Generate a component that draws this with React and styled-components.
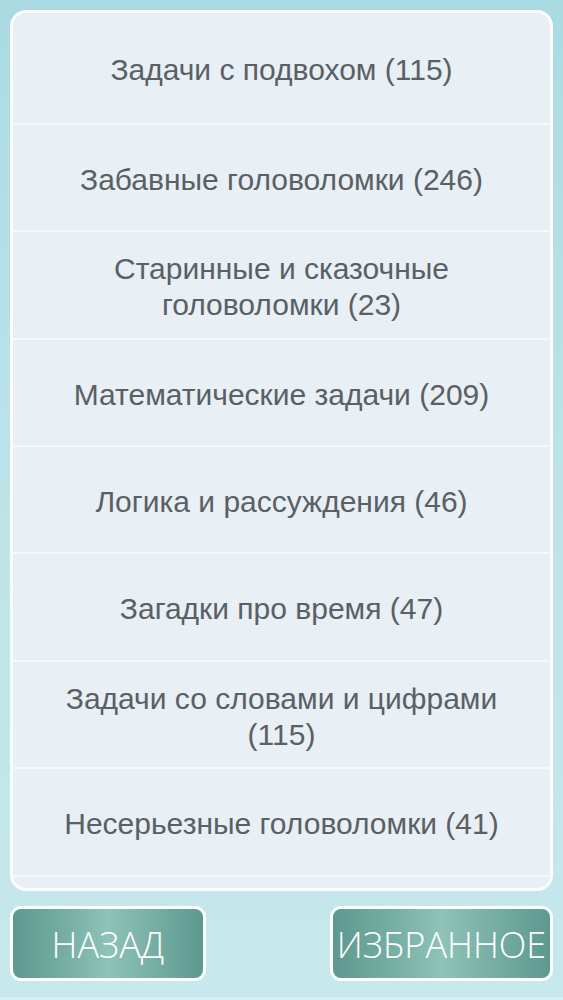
import React from "react";
import styled, { createGlobalStyle } from "styled-components";

const GlobalStyle = createGlobalStyle`
  html, body {
    margin: 0;
    padding: 0;
  }
  body {
    font-family: "Liberation Sans", Arial, sans-serif;
  }
`;

const Screen = styled.div`
  width: 563px;
  height: 1000px;
  box-sizing: border-box;
  display: flex;
  flex-direction: column;
  padding: 10px 10px 12px 10px;
  gap: 15px;
  background: linear-gradient(180deg, #aadbe2 0%, #bde3e9 50%, #c7e8ed 100%);
  border-bottom: 3px solid #d7eff2;
  overflow: hidden;
`;

const Panel = styled.div`
  height: 881px;
  box-sizing: border-box;
  border: 3px solid #fbfdfe;
  border-radius: 16px;
  background: #e8eff5;
  overflow: hidden;
  display: flex;
  flex-direction: column;
`;

const Row = styled.div`
  flex: 0 0 auto;
  height: ${({ $h }) => $h || 107}px;
  box-sizing: border-box;
  display: flex;
  align-items: center;
  justify-content: center;
  text-align: center;
  padding: 4px 36px 0 36px;
  border-bottom: 2px solid #f6f9fb;
  color: #5a6064;
  font-family: "Liberation Sans", Arial, sans-serif;
  font-size: 30px;
  line-height: 36px;
`;

const Footer = styled.div`
  display: flex;
  justify-content: space-between;
  align-items: center;
`;

const Button = styled.button`
  height: 75px;
  width: ${({ $w }) => $w}px;
  box-sizing: border-box;
  border: 3px solid #fbfdfe;
  border-radius: 11px;
  padding: 2px 0 0 0;
  background: linear-gradient(
    90deg,
    #5d998f 0%,
    #78b0a5 30%,
    #8ec3b7 50%,
    #78b0a5 72%,
    #5d998f 100%
  );
  color: #ffffff;
  font-family: "Open Sans", "DejaVu Sans", sans-serif;
  font-weight: 300;
  font-size: 36px;
  display: flex;
  align-items: center;
  justify-content: center;
`;

const items = [
  ["Задачи с подвохом (115)", 112],
  ["Забавные головоломки (246)"],
  ["Старинные и сказочные головоломки (23)", 108],
  ["Математические задачи (209)"],
  ["Логика и рассуждения (46)"],
  ["Загадки про время (47)", 108],
  ["Задачи со словами и цифрами (115)"],
  ["Несерьезные головоломки (41)", 108],
  [""],
];

export default function App() {
  return (
    <>
      <GlobalStyle />
      <Screen>
        <Panel>
          {items.map(([label, h], i) => (
            <Row key={i} $h={h}>
              {label}
            </Row>
          ))}
        </Panel>
        <Footer>
          <Button $w={196}>НАЗАД</Button>
          <Button $w={223}>ИЗБРАННОЕ</Button>
        </Footer>
      </Screen>
    </>
  );
}
